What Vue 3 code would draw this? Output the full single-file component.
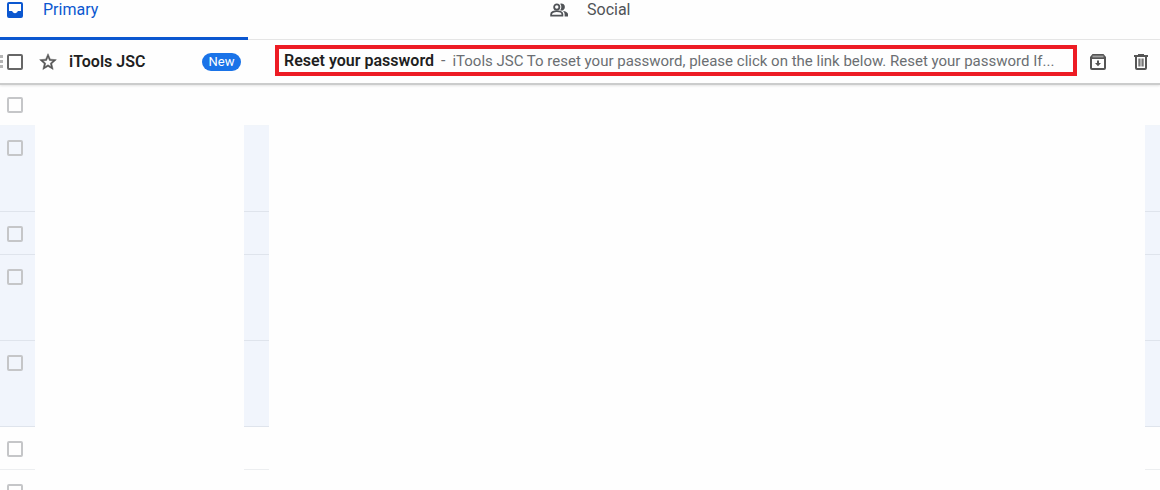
<script setup>
import { ref } from 'vue'

const opened = ref(false)
const rows = ref([
  { id: 1, kind: 'first', checked: false },
  { id: 2, kind: 'read tall', checked: false },
  { id: 3, kind: 'read', checked: false },
  { id: 4, kind: 'read tall', checked: false },
  { id: 5, kind: 'read tall', checked: false },
  { id: 6, kind: '', checked: false },
  { id: 7, kind: '', checked: false },
])
</script>

<template>
  <main class="mail">
    <nav class="tabs" aria-label="Inbox categories">
      <button class="tab active" type="button">
        <svg class="tab-icon" viewBox="0 0 18 18" aria-hidden="true">
          <path fill="currentColor" fill-rule="evenodd" d="M3 1h12a2 2 0 0 1 2 2v12a2 2 0 0 1-2 2H3a2 2 0 0 1-2-2V3a2 2 0 0 1 2-2zm0 2v7h3.2c.4 1.4 1.4 2.2 2.8 2.2s2.400-.8 2.800-2.200H15V3z" />
        </svg>
        <span>Primary</span>
      </button>
      <button class="tab" type="button">
        <svg class="tab-icon" viewBox="0 0 24 24" aria-hidden="true">
          <g fill="none" stroke="currentColor" stroke-width="2.400">
            <circle cx="9" cy="8" r="3.500" />
            <path d="M1.500 19.500v-2c0-2.700 4.500-4 7.500-4s7.500 1.300 7.500 4v2z" />
          </g>
          <path fill="currentColor" d="M13.500 3.600a4.700 4.700 0 1 1 0 8.800c2.200-2.400 2.200-6.400 0-8.800zM17 13c3.300.6 7 2 7 4.700v3h-4.500v-3c0-1.900-1-3.500-2.500-4.700z" />
        </svg>
        <span>Social</span>
      </button>
    </nav>

    <article class="message">
      <svg class="grip" viewBox="0 0 4 16" aria-hidden="true">
        <path fill="#b5b5b5" d="M0 1h3v3H0zM0 6h3v3H0zM0 11h3v3H0z" />
      </svg>
      <input v-model="opened" class="box strong" type="checkbox" aria-label="Select message from iTools JSC" />
      <button class="icon-button star" type="button" aria-label="Star message">
        <svg viewBox="0 0 24 24" aria-hidden="true">
          <path fill="currentColor" stroke="currentColor" stroke-width=".6" d="M22 9.240l-7.190-.62L12 2 9.190 8.630 2 9.240l5.460 4.730L5.820 21 12 17.270 18.180 21l-1.630-7.030L22 9.240zM12 15.400l-3.760 2.270 1-4.280-3.320-2.880 4.380-.38L12 6.100l1.710 4.040 4.380.38-3.320 2.880 1 4.280L12 15.400z" />
        </svg>
      </button>
      <span class="sender">iTools JSC</span>
      <span class="badge">New</span>
      <a class="subject" href="#message"><b>Reset your password</b><span class="dash"> - </span><span class="snippet">iTools JSC To reset your password, please click on the link below. Reset your password If...</span></a>
      <button class="icon-button archive" type="button" aria-label="Archive">
        <svg viewBox="0 0 18 18" aria-hidden="true">
          <path fill="currentColor" fill-rule="evenodd" d="M3.500 1h11L17 4v11a2 2 0 0 1-2 2H3a2 2 0 0 1-2-2V4zM3 6v9h12V6z" />
          <path fill="#a0a0a0" d="M3.500 2.600h11v1.800h-11z" />
          <path fill="currentColor" d="M8 7.500h2v2.500h2L9 13.200 6 10h2z" />
        </svg>
      </button>
      <button class="icon-button trash" type="button" aria-label="Delete">
        <svg viewBox="0 0 18 18" aria-hidden="true">
          <path fill="currentColor" fill-rule="evenodd" d="M6 1h6v1h4v2h-1v11a2 2 0 0 1-2 2H5a2 2 0 0 1-2-2V4H2V2h4zM5 4v11h8V4z" />
          <path fill="#777" d="M6.300 5.500H8v8H6.300zM10 5.500h1.700v8H10z" />
          <path fill="#b0b0b0" d="M8 5.500h2v8H8z" />
        </svg>
      </button>
    </article>

    <section class="list" aria-label="Messages">
      <div v-for="row in rows" :key="row.id" class="row" :class="row.kind">
        <div class="cell">
          <input v-model="row.checked" class="box" type="checkbox" aria-label="Select message" />
        </div>
        <div class="blank"></div>
        <div class="cell"></div>
        <div class="blank"></div>
        <div class="cell"></div>
      </div>
    </section>
  </main>
</template>

<style>
body {
  background: #fefefe;
}
</style>

<style scoped>
.mail {
  height: 100vh;
  overflow: hidden;
  background: #fefefe;
  color: #5f6368;
  font-family: Roboto, "Liberation Sans", sans-serif;
  font-size: 16px;
  line-height: 20px;
}

button {
  margin: 0;
  padding: 0;
  border: 0;
  background: none;
  color: inherit;
  font: inherit;
}

.tabs {
  display: grid;
  grid-template-columns: 248px 1fr;
  column-gap: 296px;
  height: 40px;
  box-sizing: border-box;
  border-bottom: 1px solid #e6e6e6;
}

.tab {
  display: flex;
  align-items: flex-start;
  gap: 19px;
  height: 40px;
  box-sizing: border-box;
  padding-left: 6px;
  color: #505357;
  text-align: left;
}

.tab-icon {
  width: 18px;
  height: 18px;
  margin-top: 1px;
}

.tab.active {
  border-bottom: 3px solid #0b57d0;
  border-top-right-radius: 3px;
  color: #0b57d0;
}

.message {
  display: flex;
  align-items: center;
  height: 45px;
  box-sizing: border-box;
  border-bottom: 2px solid #cbcccc;
  box-shadow: 0 1px 2px #e4e4e4;
}

.grip {
  width: 4px;
  height: 16px;
}

.box {
  appearance: none;
  flex: none;
  display: block;
  width: 16px;
  height: 16px;
  margin: 0;
  box-sizing: border-box;
  border: 2px solid #c5c6c8;
  border-radius: 2px;
}

.box.strong {
  margin-left: 3px;
  border-color: #666;
}

.icon-button {
  flex: none;
  width: 18px;
  height: 18px;
  color: #555;
}

.icon-button svg {
  display: block;
  width: 100%;
  height: 100%;
}

.star {
  width: 20px;
  height: 20px;
  margin-left: 15px;
}

.sender {
  width: 133px;
  margin-left: 11px;
  color: #1f1f1f;
  font-weight: 600;
}

.badge {
  width: 39px;
  border-radius: 9px;
  background: #1a73e8;
  color: #fff;
  font-size: 13px;
  line-height: 18px;
  text-align: center;
}

.subject {
  flex: 1;
  min-width: 0;
  margin: 0 0 2px 34px;
  padding: 2px 5px 1px 5px;
  box-sizing: border-box;
  border: 4px solid #ed1c24;
  overflow: hidden;
  color: #6b6e72;
  text-decoration: none;
  text-overflow: ellipsis;
  white-space: nowrap;
}

.subject b {
  color: #1f1f1f;
  font-weight: 600;
}

.dash {
  margin: 0 3px;
}

.snippet {
  font-size: 15px;
}

.archive {
  margin-left: 12px;
}

.trash {
  margin: 0 10px 0 25px;
}

.row {
  display: grid;
  grid-template-columns: 35px 209px 25px 1fr 15px;
  height: 43px;
}

.row.tall {
  height: 86px;
}

.row.first {
  height: 41px;
}

.cell {
  box-sizing: border-box;
  padding: 14px 0 0 7px;
  border-bottom: 1px solid #eceef0;
}

.first .cell {
  padding-top: 12px;
  border-bottom-color: #f1f5fa;
}

.read .cell {
  background: #f1f5fc;
  border-bottom-color: #dfe4ec;
}
</style>
